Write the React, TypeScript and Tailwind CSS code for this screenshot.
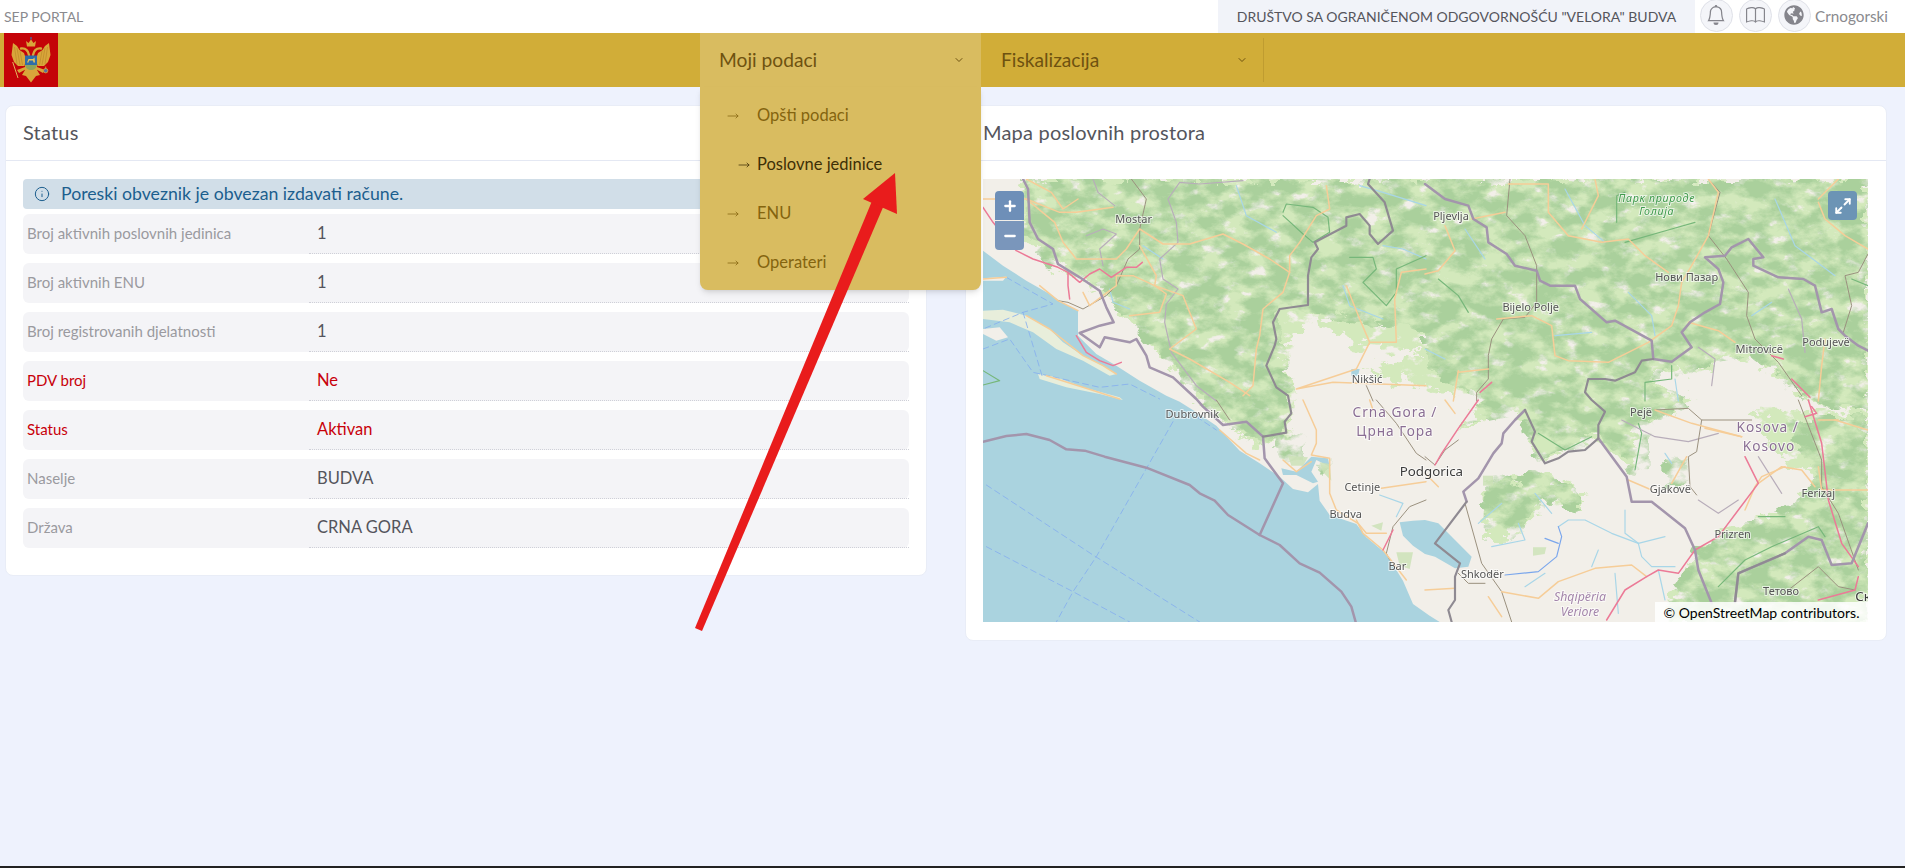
import { ChevronDown, Info, Maximize2, Plus, Minus, MoveRight } from 'lucide-react';
import { BsBell, BsBook } from 'react-icons/bs';
import { FaGlobeAmericas } from 'react-icons/fa';

const rows = [
  { label: 'Broj aktivnih poslovnih jedinica', value: '1' },
  { label: 'Broj aktivnih ENU', value: '1' },
  { label: 'Broj registrovanih djelatnosti', value: '1' },
  { label: 'PDV broj', value: 'Ne', red: true },
  { label: 'Status', value: 'Aktivan', red: true },
  { label: 'Naselje', value: 'BUDVA' },
  { label: 'Država', value: 'CRNA GORA' },
];

const menu = ['Opšti podaci', 'Poslovne jedinice', 'ENU', 'Operateri'];

// map lines, in 3x map pixels, one list per quadrant of the map
type Quad = { dx: number; dy: number; orange: string[]; pink: string[]; grey: string[]; lilac: string[]; river: string[]; strong: string[]; ferry: string[]; park: string[] };

const quads: Quad[] = [
  {
    dx: 0,
    dy: 0,
    orange: [
      '0,60 130,60 230,100 280,100 390,85',
      '130,0 205,40 240,90 285,60',
      '130,60 215,130 240,190 280,240 400,240 430,210 470,150 540,195 620,195 720,165 780,195 860,240 920,280 900,340 840,390 830,470 820,510 810,620 780,650',
      '920,280 920,230 950,190 1000,110 1040,90 1030,20',
      '470,200 520,290 515,320 600,350 640,450 560,510 620,540 740,610 800,650',
      '440,410 530,400 550,345 515,320',
      '300,340 320,380 400,320 400,290 450,290 515,320',
      '1090,320 1130,420 1160,490 1240,490 1235,360 1255,280 1329,270',
      '1160,490 1120,570 940,630 1050,610 1329,620',
      '0,300 70,295',
      '130,410 200,450 300,530 360,560 400,585',
      '170,320 225,365 285,395',
      '190,590 300,625 410,660',
    ],
    pink: [
      '0,85 30,130 100,215 150,240 225,265 255,280 290,310 320,285 350,270 385,295 430,265 460,265 478,250',
      '255,280 255,320 260,360',
      '280,470 310,520 350,545 390,560 415,550',
    ],
    grey: [
      '445,0 490,60 470,150 470,210 435,240 400,320 370,350 300,390 255,370 225,365',
      '1150,620 1170,666',
    ],
    lilac: [
      '780,5 650,15 590,10 555,60 580,130 585,190 530,240 540,300 585,330 550,375 545,430 565,520 640,620 700,666',
      '330,0 345,40 395,80',
      '310,170 360,150 400,165 350,210 360,260',
    ],
    river: ['480,200 540,240', '380,330 390,370 440,390', '760,20 790,110 880,160', '1080,320 1100,380 1200,420', '1130,20 1200,40 1329,80', '1200,200 1260,210 1329,240'],
    strong: [],
    ferry: ['0,510 80,480 150,580 350,625 440,615 530,660', '70,295 210,375 120,400 0,450', '120,400 180,600'],
    park: ['900,100 910,75 990,85 1035,115 1040,160 990,190 960,165 900,110', '1100,235 1170,235 1180,270 1140,310 1210,380 1240,340 1240,270 1329,230', '0,575 50,605 0,618'],
  },
  {
    dx: 1326,
    dy: 0,
    orange: [
      '0,285 40,275 90,215 60,140',
      '100,580 190,570',
      '100,575 85,666',
      '215,420 320,410 380,440 390,530 430,545 550,550 670,490 740,440 760,380 770,310 800,260 850,170 880,40 850,0',
      '250,15 370,15 370,100 430,170 530,190 610,180 660,230 730,280',
      '510,0 520,50 470,150',
      '140,120 240,100',
      '790,430 880,455 930,490',
      '1180,70 1200,120 1260,170 1329,210',
      '1180,666 1190,560 1200,480',
      '1240,0 1180,60',
    ],
    pink: ['165,640 200,610', '1040,530 1075,540', '1100,600 1155,655'],
    grey: [
      '255,0 245,110 300,170 335,260 335,370 300,415 235,420 200,480 190,530 190,600 155,640 155,666',
      '850,0 885,40 850,170 905,240 970,340 965,410 990,480 1060,550 1130,650',
      '1329,225 1300,280 1260,290 1280,380 1255,460',
    ],
    lilac: ['820,505 870,540 860,620', '1090,330 1130,420 1140,520'],
    river: ['420,30 480,140 540,190', '610,340 680,410 690,470', '390,470 500,460', '1050,60 1110,200 1230,290', '980,410 1040,370', '120,150 180,240', '0,510 60,540', '750,600 760,666'],
    strong: [],
    ferry: [],
    park: ['575,130 575,50 600,40', '600,190 740,150 810,130', '740,560 740,600 660,610 660,666', '40,300 100,350 130,400', '1280,300 1329,320'],
  },
  {
    dx: 0,
    dy: 663,
    orange: [
      '710,90 790,160 830,180',
      '960,0 1000,90 1000,130 985,165 1040,175 1040,280 1060,330 1125,370 1150,400 1210,400',
      '900,180 940,215 985,185',
      '1195,265 1329,245',
      '1120,360 1140,400 1200,450 1270,540',
      '1160,0 1170,30',
    ],
    pink: ['1200,450 1230,390'],
    grey: ['1180,0 1240,70 1300,160 1329,180', '1210,460 1230,380 1280,320 1329,300', '1210,460 1220,480', '700,0 740,60'],
    lilac: [],
    river: ['1190,285 1260,310 1240,350'],
    strong: [],
    ferry: ['570,65 340,470 270,575 220,666', '10,255 330,465 650,666', '10,440 270,575 440,666', '640,50 700,90'],
    park: [],
  },
  {
    dx: 1326,
    dy: 663,
    orange: [
      '690,30 800,70 950,110',
      '840,85 950,110',
      '740,250 785,170',
      '1000,250 1070,200 1130,210 1170,260',
      '960,330 990,260 1010,230 1080,200',
      '1240,60 1180,60',
      '1329,90 1230,60',
      '230,575 340,595 400,545 510,505 560,500 620,495 665,530',
      '0,570 90,565',
      '190,590 230,650',
      '610,240 680,270',
      '1180,200 1190,270 1329,270',
      '60,0 90,40',
      '0,220 40,260',
    ],
    pink: [
      '160,0 100,85 50,160 30,195',
      '1150,0 1190,130 1210,300 1250,430 1300,500',
      '960,170 1000,250 940,330 880,410 810,450 760,520 700,510 665,530 600,570 545,660',
      '1140,50 1175,40 1160,20',
      '1300,530 1290,570 1180,600',
    ],
    grey: [
      '690,30 790,25 830,60 900,60 980,60',
      '830,60 815,155 790,170 795,260 815,285',
      '1120,0 1190,180 1190,260 1240,340 1300,510',
      '0,170 30,195 60,150 100,120',
      '120,310 170,490 230,575 260,666',
      '100,520 130,550 180,550',
      '1090,570 1180,500 1240,560 1290,570',
    ],
    lilac: ['590,60 690,110 790,125 880,100', '820,300 880,340 940,300', '1000,170 1070,280'],
    river: [
      '400,380 430,360 480,360 560,400 640,430 650,470 680,500 750,500',
      '600,330 600,400 640,430',
      '500,500 520,450',
      '330,280 380,340',
      '160,370 230,310',
      '280,370 300,420 200,440',
      '640,430 720,410',
      '700,510 720,600',
      '570,520 580,640',
      '360,520 300,560',
      '720,160 740,190',
    ],
    strong: ['400,380 410,410 395,470 340,515 240,525', '360,415 400,430'],
    ferry: [],
    park: ['640,70 650,100 630,210', '880,560 960,480 1040,440 1180,380 1200,410', '340,100 420,150 500,110', '1000,350 1080,350'],
  },
];

const labels = [
  { t: 'Mostar', x: 452, y: 131 },
  { t: 'Nikšić', x: 1152, y: 611 },
  { t: 'Pljevlja', x: 1404, y: 124 },
  { t: 'Bijelo Polje', x: 1643, y: 396 },
  { t: 'Нови Пазар', x: 2111, y: 307 },
  { t: 'Mitrovicë', x: 2329, y: 523 },
  { t: 'Podujevë', x: 2529, y: 502 },
  { t: 'Dubrovnik', x: 628, y: 716 },
  { t: 'Cetinje', x: 1138, y: 936 },
  { t: 'Budva', x: 1088, y: 1016 },
  { t: 'Bar', x: 1243, y: 1172 },
  { t: 'Shkodër', x: 1498, y: 1198 },
  { t: 'Pejë', x: 1974, y: 710 },
  { t: 'Gjakovë', x: 2062, y: 942 },
  { t: 'Prizren', x: 2249, y: 1077 },
  { t: 'Ferizaj', x: 2506, y: 953 },
  { t: 'Тетово', x: 2394, y: 1248 },
];

function MapDrawing() {
  return (
    <svg viewBox="0 0 2655 1329" className="block h-full w-full blur-[0.5px]">
      <defs>
        <filter id="soft" x="-5%" y="-5%" width="110%" height="110%" colorInterpolationFilters="sRGB">
          <feTurbulence type="fractalNoise" baseFrequency="0.02 0.03" numOctaves="5" seed="7" result="n" />
          <feDisplacementMap in="SourceGraphic" in2="n" scale="90" xChannelSelector="R" yChannelSelector="G" result="d" />
          <feColorMatrix in="n" values="0 0 0 0 0  0 0 0 0 0  0 0 0 0 0  7 0 0 0 -1.9" result="m" />
          <feComposite in="d" in2="m" operator="in" />
        </filter>
        <filter id="forest" x="-5%" y="-5%" width="110%" height="110%" colorInterpolationFilters="sRGB">
          <feTurbulence type="fractalNoise" baseFrequency="0.014 0.022" numOctaves="5" seed="21" result="n" />
          <feDisplacementMap in="SourceGraphic" in2="n" scale="80" xChannelSelector="R" yChannelSelector="G" result="d" />
          <feColorMatrix in="n" values="0 0 0 0 0  0 0 0 0 0  0 0 0 0 0  3.6 0 0 0 -1.25" result="m" />
          <feComposite in="d" in2="m" operator="in" />
        </filter>
      </defs>

      <rect width="2655" height="1329" fill="#aad3df" />
      {/* land */}
      <polygon
        fill="#f2efe9"
        points="0,215 60,260 130,305 200,345 240,372 285,395 285,470 340,525 400,560 470,605 550,650 590,668 640,700 700,740 770,815 830,853 890,893 930,930 975,940 1005,915 1010,965 1040,1008 1120,1035 1150,1075 1210,1125 1260,1205 1290,1275 1340,1310 1370,1329 2655,1329 2655,0 0,0"
      />
      <polygon fill="#e8eedb" points="0,395 60,392 130,410 200,450 240,490 300,530 360,560 400,585 380,590 300,545 220,510 150,460 80,430 0,420" />
      <polygon fill="#f2efe9" points="0,450 50,445 75,475 40,485 0,465" />
      <polygon fill="#e8eedb" points="165,585 220,595 300,625 410,655 420,663 350,645 250,625 170,600" />
      <polygon fill="#f2efe9" points="0,298 70,293 60,305 0,305" />
      {/* water */}
      <polygon fill="#aad3df" points="895,868 940,878 985,833 1035,838 1040,863 1000,843 985,878 1005,908 990,913 940,888 900,888" />
      <polygon fill="#aad3df" points="1250,1030 1290,1025 1326,1023 1366,1033 1416,1083 1466,1133 1456,1163 1416,1168 1356,1133 1326,1125 1290,1100 1260,1070" />
      <polygon fill="#aad3df" points="815,540 845,535 860,560 850,580 825,565" />
      <polygon fill="#aad3df" points="410,360 440,365 450,390 420,385" />
      <polygon fill="#aad3df" points="1105,570 1130,570 1125,590 1105,590" />

      {/* meadow and forest */}
      <g filter="url(#soft)" fill="#d3e9bc">
        <polygon points="130,0 100,150 200,250 350,320 430,410 500,490 640,640 690,700 760,760 830,790 910,770 925,700 930,620 900,500 1000,420 1120,500 1329,520 1150,570 1329,640 1480,650 1500,663 1430,760 1500,720 1620,690 1660,850 1830,780 1850,770 1950,880 1965,740 2130,665 2000,600 2130,570 2300,530 2400,600 2470,660 2655,700 2655,0" />
        <polygon points="2300,690 2655,700 2655,1329 2060,1329 2060,1260 2150,1110 2300,1030 2420,1000 2500,900 2350,800" />
        <polygon points="1510,910 1700,880 1800,950 1800,1000 1690,960 1580,1080 1500,1080" />
      </g>
      <g filter="url(#forest)" fill="#aad09c">
        <polygon points="130,0 120,150 200,250 350,320 430,410 500,490 640,640 690,700 760,760 830,790 910,770 925,700 930,620 900,500 880,400 1000,400 1329,450 1329,560 1480,650 1500,663 1430,760 1500,720 1620,690 1660,850 1830,780 1850,770 1950,880 1965,740 2130,665 2000,600 2130,570 2300,530 2400,600 2470,660 2655,700 2655,0" />
        <polygon points="2400,720 2655,720 2655,1329 2060,1329 2060,1260 2150,1110 2300,1030 2420,1000 2500,900" />
        <polygon points="1900,680 2000,700 2000,880 1950,880" />
        <polygon points="1510,910 1700,880 1800,950 1800,1000 1690,960 1580,1080 1500,1080" />
        <polygon points="2050,830 2110,830 2110,930 2050,930" />
        <polygon points="1000,850 1040,850 1040,900 1010,880" />
        <polygon points="880,770 960,770 960,850 880,850" />
      </g>
      <g fill="#cbe2b5" opacity="0.8">
        <polygon points="1010,850 1040,855 1045,905 1020,880" />
        <polygon points="915,830 975,835 960,860 925,860" />
        <polygon points="1165,1040 1200,1030 1195,1055" />
        <polygon points="1240,1120 1290,1120 1280,1170 1250,1160" />
        <polygon points="1650,1105 1690,1105 1685,1125 1650,1130" />
        <polygon points="1500,890 1530,890 1530,920 1500,920" />
      </g>

      {/* lines per quadrant */}
      {quads.map((q) => (
        <g key={q.dx + '-' + q.dy} transform={`translate(${q.dx} ${q.dy})`} fill="none" strokeLinejoin="round" strokeLinecap="round">
          {q.river.map((p) => <polyline key={p} points={p} stroke="#a8d6e8" strokeWidth="3.5" />)}
          {q.strong.map((p) => <polyline key={p} points={p} stroke="#7aa6ec" strokeWidth="3.5" />)}
          {q.ferry.map((p) => <polyline key={p} points={p} stroke="#86aeee" strokeWidth="2.5" strokeDasharray="18 12" />)}
          {q.park.map((p) => <polyline key={p} points={p} stroke="#76b77a" strokeWidth="3.5" />)}
          {q.lilac.map((p) => <polyline key={p} points={p} stroke="#b8adba" strokeWidth="3.5" />)}
          {q.grey.map((p) => <polyline key={p} points={p} stroke="#9b917f" strokeWidth="3" />)}
          {q.orange.map((p) => <polyline key={p} points={p} stroke="#f6cd98" strokeWidth="4.5" />)}
          {q.pink.map((p) => <polyline key={p} points={p} stroke="#ec7a97" strokeWidth="4.5" />)}
        </g>
      ))}

      {/* borders */}
      <g fill="none" stroke="#a395ac" strokeWidth="7.5" strokeLinejoin="round" strokeLinecap="round">
        <polyline points="120,0 135,30 140,130 165,180 210,210 225,255 290,295 350,335 370,385 392,430 350,440 290,462 350,505 365,475 440,490 460,480 490,530 500,565 570,595 640,660 660,683 720,738 790,728 840,773 845,838 900,913 830,1068" />
        <polyline points="0,788 70,771 130,765 200,783 250,811 305,815 365,833 490,866 620,918 650,943 695,965 735,1008 830,1068 890,1098 950,1153 1010,1181 1075,1238 1105,1283 1118,1329" />
        <polyline points="1326,15 1386,60 1456,80 1471,120 1511,145 1516,190 1571,225 1596,260 1661,275 1671,305 1701,320 1776,320 1791,360 1871,430 1896,425 2006,485 2011,540" />
        <polyline points="2011,540 2066,548 2126,505 2096,460 2121,430 2166,400 2211,375 2221,310 2206,270 2166,235 2226,230 2246,205 2296,180 2341,235 2311,240 2311,260 2386,295 2461,300 2496,320 2516,400 2546,390 2566,450 2586,470 2626,500 2655,515" />
        <polyline points="1846,778 1931,893 1946,968 2006,968 2106,1048 2136,1113 2146,1173 2186,1273" />
        <polyline points="2256,1269 2266,1183 2406,1123 2476,1073 2516,1083 2546,1158 2606,1153 2655,1033" />
        <polyline points="1626,693 1596,723 1561,763 1556,793 1531,823 1486,898 1441,938 1451,968" />
      </g>
      <g fill="none" stroke="#8f8a92" strokeWidth="6.5" strokeLinejoin="round" strokeLinecap="round">
        <polyline points="840,773 910,761 905,728 925,703 915,650 880,625 850,560 875,500 880,480 870,430 890,390 975,378 975,290 985,235 1005,210 995,190 1090,140 1090,115 1130,105 1160,140 1160,165 1185,195 1230,155 1205,70 1155,15 1160,0" />
        <polyline points="2011,540 1976,545 1956,580 1896,605 1866,600 1816,600 1806,640 1826,663 1866,698 1846,738 1846,778 1806,813 1756,818 1726,838 1686,853 1646,788 1656,758 1626,693" />
        <polyline points="1451,968 1356,1093 1431,1153 1416,1193 1416,1263 1396,1293 1406,1329" />
        <polyline points="2256,1269 2266,1183 2406,1123" />
      </g>

      {/* places */}
      <g fontFamily="'Noto Sans', sans-serif" textAnchor="middle" paintOrder="stroke" stroke="#ffffff" strokeOpacity="0.65" strokeWidth="6">
        {labels.map((l) => (
          <text key={l.t} x={l.x} y={l.y} fontSize="33" fill="#555">{l.t}</text>
        ))}
        <text x="2021" y="69" fontSize="32" fontStyle="italic" fill="#3e9a4c" letterSpacing="2">Парк природе</text>
        <text x="2021" y="109" fontSize="32" fontStyle="italic" fill="#3e9a4c" letterSpacing="2">Голија</text>
        <text x="1236" y="715" fontSize="41" letterSpacing="3" fill="#8a6e94">Crna Gora /</text>
        <text x="1236" y="770" fontSize="41" letterSpacing="3" fill="#8a6e94">Црна Гора</text>
        <text x="1345" y="892" fontSize="40" fill="#3c3c3c">Podgorica</text>
        <text x="2354" y="760" fontSize="41" letterSpacing="3" fill="#8a6e94">Kosova /</text>
        <text x="2358" y="815" fontSize="41" letterSpacing="3" fill="#8a6e94">Kosovo</text>
        <text x="1791" y="1266" fontSize="37" fontStyle="italic" fill="#a486ab">Shqipëria</text>
        <text x="1791" y="1311" fontSize="37" fontStyle="italic" fill="#a486ab">Veriore</text>
        <text x="2640" y="1265" fontSize="40" fill="#3c3c3c">Ск</text>
      </g>
    </svg>
  );
}

function Flag() {
  return (
    <svg viewBox="0 0 54 54" className="h-[54px] w-[54px]">
      <rect width="54" height="54" fill="#c40308" />
      {/* coat of arms */}
      <g fill="#d9a63a">
        <polygon points="9,10 13,13 15.5,17 20,20 22,26 20.5,33 14,33 10,29 7.5,22" />
        <polygon points="45,10 41,13 38.5,17 34,20 32,26 33.5,33 40,33 44,29 46.5,22" />
        <path d="M22 8 L24.5 10 L27 6.5 L29.5 10 L32 8 L31 13.5 L23 13.5 Z" />
        <path d="M21 32 L33 32 L33 37 L36 42 L32 43 L27 49.5 L22 43 L18 42 L21 37 Z" />
        <polygon points="13,37 21,34 21.5,36.5 15,40" />
        <polygon points="41,37 33,34 32.5,36.5 39,40" />
      </g>
      <g fill="none" stroke="#d9a63a" strokeWidth="2.4" strokeLinecap="round">
        <path d="M25 22 C24 17 21 15 17 15.5" />
        <path d="M29 22 C30 17 33 15 37 15.5" />
      </g>
      <g stroke="#b07f22" strokeWidth="0.5" fill="none">
        <path d="M10.5 14 L13 31 M13 15 L16 32 M16 18 L18.5 32" />
        <path d="M43.5 14 L41 31 M41 15 L38 32 M38 18 L35.5 32" />
      </g>
      <path d="M8.7 29 L14 45" stroke="#e2b75c" strokeWidth="1" />
      <rect x="21" y="22.5" width="12" height="9.5" fill="#2f6da8" />
      <path d="M23 29.5 L24.5 26 L29 26 L30.5 24.5 L31 29.5 L29.5 29.5 L29 27.5 L25 27.5 L24.5 29.5 Z" fill="#e6c45e" />
      <path d="M21 32 L33 32 C32.5 35 30 37 27 37 C24 37 21.5 35 21 32 Z" fill="#8fa35a" />
      <circle cx="41.7" cy="37.7" r="2.2" fill="#5b6fa0" stroke="#d9a63a" strokeWidth="0.8" />
      <rect x="41.3" y="33.5" width="0.9" height="2.4" fill="#d9a63a" />
      <rect x="26.3" y="4" width="1.4" height="2.6" fill="#4a6aa0" />
    </svg>
  );
}

function App() {
  return (
    <div className="relative flex h-[868px] flex-col overflow-hidden bg-[#eef2fd] [font-family:Lato,sans-serif]">
      {/* top bar */}
      <div className="flex h-[33px] items-center justify-between bg-white pl-1 pr-[17px]">
        <span className="text-[14px] text-[#8a8a8e]">SEP PORTAL</span>
        <div className="flex h-full items-center">
          <div className="flex h-full w-[477px] items-center justify-center bg-[#f1f3f9] text-[14px] text-[#55555c]">
            DRUŠTVO SA OGRANIČENOM ODGOVORNOŠĆU "VELORA" BUDVA
          </div>
          <div className="-mt-[3px] ml-[5px] flex size-[33px] items-center justify-center rounded-full border border-[#dfe1e8] bg-[#f4f5f9] text-[#85858c]">
            <BsBell size={20} />
          </div>
          <div className="-mt-[3px] ml-[6px] flex size-[33px] items-center justify-center rounded-full border border-[#dfe1e8] bg-[#f4f5f9] text-[#85858c]">
            <BsBook size={19} />
          </div>
          <div className="-mt-[3px] ml-[6px] flex size-[33px] items-center justify-center rounded-full border border-[#dfe1e8] bg-[#f4f5f9] text-[#85858c]">
            <FaGlobeAmericas size={20} />
          </div>
          <span className="ml-[4px] text-[15.3px] text-[#8a8a8e]">Crnogorski</span>
        </div>
      </div>

      {/* nav */}
      <div className="flex h-[54px] bg-[#d1ad38] pl-1 text-[19.2px] text-[#6e5210]">
        <Flag />
        <div className="relative ml-[642px] flex w-[281px] items-center justify-between bg-[#d9bc60] pl-[19px] pr-[16px]">
          <span>Moji podaci</span>
          <ChevronDown size={12} />
          <div className="absolute left-0 top-[54px] z-10 w-full rounded-b-lg bg-[#d9bc60] pb-[3px] pt-[4px] text-[16.5px] shadow-md">
            {menu.map((m, i) => (
              <div key={m} className={'flex h-[49px] items-center pl-[27px] ' + (i === 1 ? 'text-[#3d2f06]' : 'text-[#84640f]')}>
                <span className={'w-[30px] ' + (i === 1 ? 'pl-[11px]' : '')}>
                  <MoveRight size={12} strokeWidth={1.5} />
                </span>
                {m}
              </div>
            ))}
          </div>
        </div>
        <div className="my-[5px] flex w-[283px] items-center justify-between border-r border-[#bf9c30] pl-[20px] pr-[15px]">
          <span>Fiskalizacija</span>
          <ChevronDown size={12} />
        </div>
      </div>

      {/* content */}
      <div className="flex flex-1 items-start gap-[38px] pl-[5px] pt-[18px]">
        <div className="w-[922px] rounded-lg border border-[#e9edf7] bg-white">
          <div className="flex h-[55px] items-center border-b border-[#e4e8f3] px-[17px] pb-[2px] text-[20px] tracking-[0.2px] text-[#55555c]">Status</div>
          <div className="flex flex-col gap-[9px] px-[17px] pb-[27px] pt-[18px]">
            <div className="-mb-1 flex h-[30px] items-center gap-[11px] rounded bg-[#d1dee8] pl-[11px] text-[17.7px] text-[#1c5e8e]">
              <Info size={16} strokeWidth={1.5} />
              Poreski obveznik je obvezan izdavati račune.
            </div>
            {rows.map((r) => (
              <div key={r.label} className="flex h-[40px] rounded-md bg-[#f4f4f7]">
                <div className={'flex w-[286px] items-center pb-[1px] pl-[4px] text-[15px] ' + (r.red ? 'text-[#c8000a]' : 'text-[#9a9a9f]')}>{r.label}</div>
                <div className={'flex flex-1 items-center border-b border-dotted border-[#cfd0d8] pb-[1px] pl-[8px] text-[16.5px] ' + (r.red ? 'text-[#c8000a]' : 'text-[#55555c]')}>
                  {r.value}
                </div>
              </div>
            ))}
          </div>
        </div>

        <div className="w-[922px] rounded-lg border border-[#e9edf7] bg-white">
          <div className="flex h-[55px] items-center border-b border-[#e4e8f3] px-[17px] pb-[2px] text-[20px] tracking-[0.2px] text-[#55555c]">Mapa poslovnih prostora</div>
          <div className="p-[18px] pl-[17px]">
            <div className="relative h-[443px] w-[885px] overflow-hidden">
              <MapDrawing />
              <div className="absolute left-3 top-3 flex w-[29px] flex-col gap-px">
                <div className="flex h-[29px] items-center justify-center rounded-t-sm bg-[#6e8fb8] text-white"><Plus size={16} strokeWidth={3.5} /></div>
                <div className="flex h-[29px] items-center justify-center rounded-b-sm bg-[#7a96bb] text-white"><Minus size={16} strokeWidth={3.5} /></div>
              </div>
              <div className="absolute right-[11px] top-3 flex size-[29px] items-center justify-center rounded-sm bg-[#6c94b5] text-white">
                <Maximize2 size={18} strokeWidth={2.5} />
              </div>
              <div className="absolute bottom-0 right-0 flex h-[20px] w-[213px] items-center justify-center bg-white/85 text-[14px] text-black">
                © OpenStreetMap contributors.
              </div>
            </div>
          </div>
        </div>
      </div>

      <div className="h-[2px] bg-[#222222]" />

      {/* annotation arrow on top of the page */}
      <svg className="pointer-events-none absolute left-0 top-0 z-20" width="1905" height="868">
        <polygon points="695,628 702,631 884,205 872,201" fill="#e91c1c" />
        <polygon points="895,173 863,199 897,214" fill="#e91c1c" />
      </svg>
    </div>
  );
}

export default App;
